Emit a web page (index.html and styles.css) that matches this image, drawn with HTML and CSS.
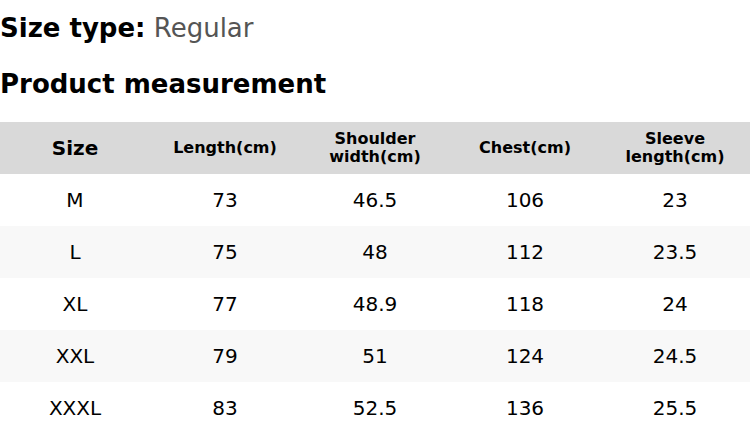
FILE: index.html
```html
<!DOCTYPE html>
<html>
<head>
<meta charset="utf-8">
<link rel="stylesheet" href="styles.css">
</head>
<body>
<div class="page">
  <p class="size-type"><span class="label">Size type:</span> <span class="value">Regular</span></p>
  <h2 class="title">Product measurement</h2>
  <table class="chart">
    <thead>
      <tr>
        <th class="first">Size</th>
        <th>Length(cm)</th>
        <th>Shoulder<br>width(cm)</th>
        <th>Chest(cm)</th>
        <th>Sleeve<br>length(cm)</th>
      </tr>
    </thead>
    <tbody>
      <tr><td>M</td><td>73</td><td>46.5</td><td>106</td><td>23</td></tr>
      <tr><td>L</td><td>75</td><td>48</td><td>112</td><td>23.5</td></tr>
      <tr><td>XL</td><td>77</td><td>48.9</td><td>118</td><td>24</td></tr>
      <tr><td>XXL</td><td>79</td><td>51</td><td>124</td><td>24.5</td></tr>
      <tr><td>XXXL</td><td>83</td><td>52.5</td><td>136</td><td>25.5</td></tr>
    </tbody>
  </table>
</div>
</body>
</html>
```
FILE: styles.css
```css
html, body {
  margin: 0;
  padding: 0;
  background: #ffffff;
}
.page {
  font-family: "DejaVu Sans", sans-serif;
  color: #000;
  width: 750px;
}
.size-type {
  margin: 0;
  padding-top: 13px;
  font-size: 26px;
  line-height: 30px;
}
.label {
  font-weight: bold;
}
.value {
  color: #555555;
}
.title {
  margin: 0;
  padding-top: 26px;
  font-size: 26px;
  font-weight: bold;
  line-height: 30px;
}
.chart {
  margin-top: 23px;
  width: 750px;
  border-collapse: collapse;
  table-layout: fixed;
}
.chart th {
  background: #d9d9d9;
  height: 52px;
  padding: 0;
  font-size: 16px;
  line-height: 18px;
  font-weight: bold;
  text-align: center;
  vertical-align: middle;
}
.chart th.first {
  font-size: 20px;
}
.chart td {
  height: 52px;
  padding: 0;
  font-size: 20px;
  text-align: center;
  vertical-align: middle;
}
.chart tbody tr:nth-child(even) td {
  background: #f8f8f8;
}
```
